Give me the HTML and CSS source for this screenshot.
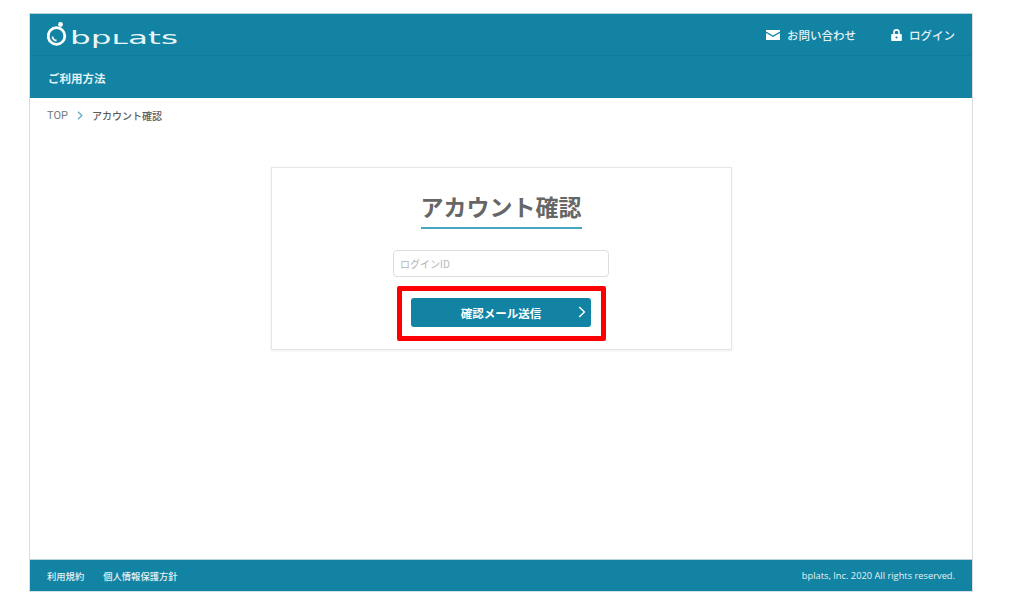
FILE: index.html
```html
<!DOCTYPE html>
<html lang="ja">
<head>
<meta charset="utf-8">
<title>アカウント確認</title>
<link rel="stylesheet" href="styles.css">
</head>
<body>
<div class="frame">
  <header class="header">
    <div class="topbar">
      <a class="logo" href="#">
        <svg class="logo-mark" width="21" height="26" viewBox="0 0 21 26">
          <circle cx="13.500" cy="2.500" r="2.400" fill="#fff"/>
          <path d="M4 8.200 6.500 6" fill="none" stroke="#fff" stroke-width="2"/>
          <circle cx="9.500" cy="14" r="8.300" fill="none" stroke="#fff" stroke-width="2.800"/>
          <path d="M5.500 14.500a4 4 0 0 0 4 4" fill="none" stroke="#fff" stroke-width="1.800"/>
        </svg>
        <svg class="logo-word" width="112" height="26" viewBox="0 0 112 26">
          <text x="1" y="18.500" class="logo-text" textLength="108" lengthAdjust="spacingAndGlyphs">bpʟats</text>
        </svg>
      </a>
      <nav class="topnav">
        <a class="topnav-item" href="#">
          <svg width="14" height="10" viewBox="0 0 13 10" preserveAspectRatio="none"><path d="M0 0h13v1.600L6.500 5.600 0 1.600z M0 3l6.500 4L13 3v7H0z" fill="#fff"/></svg>
          お問い合わせ
        </a>
        <a class="topnav-item" href="#">
          <svg width="11" height="12" viewBox="0 0 11 12"><path d="M1 5h1.200V3.400a3.300 3.300 0 0 1 6.600 0V5H10a.8.8 0 0 1 .8.8v5.400a.8.8 0 0 1-.8.8H1a.8.8 0 0 1-.8-.8V5.800A.8.8 0 0 1 1 5zm2.800 0h3.400V3.400a1.700 1.700 0 0 0-3.400 0z" fill="#fff"/><circle cx="5.500" cy="8.500" r="1.100" fill="#1283a3"/></svg>
          ログイン
        </a>
      </nav>
    </div>
    <div class="subbar"><a class="subbar-link" href="#">ご利用方法</a></div>
  </header>

  <div class="crumbs">
    <a class="crumb-top" href="#">TOP</a>
    <svg class="crumb-sep" width="6" height="9" viewBox="0 0 6 9"><path d="M1 .8 4.800 4.500 1 8.200" fill="none" stroke="#5ba9c4" stroke-width="1.200"/></svg>
    <span class="crumb-now">アカウント確認</span>
  </div>

  <main class="main">
    <section class="card">
      <h1 class="title">アカウント確認</h1>
      <input class="field" type="text" placeholder="ログインID">
      <button class="submit" type="button">
        <span>確認メール送信</span>
        <svg class="submit-arrow" width="8" height="12" viewBox="0 0 8 12"><path d="M1.200 1 6.400 6 1.200 11" fill="none" stroke="#fff" stroke-width="1.400"/></svg>
      </button>
      <div class="highlight"></div>
    </section>
  </main>

  <footer class="footer">
    <div class="footer-links"><a href="#">利用規約</a><a href="#">個人情報保護方針</a></div>
    <div class="copyright">bplats, Inc. 2020 All rights reserved.</div>
  </footer>
</div>
</body>
</html>
```
FILE: styles.css
```css
* { box-sizing: border-box; }
html, body { margin: 0; height: 100%; background: #fff; }
body {
  padding: 13px 47px 15px 29px;
  font-family: "Noto Sans CJK JP", "Noto Sans", sans-serif;
  overflow: hidden;
}
a { color: inherit; text-decoration: none; }
.frame {
  height: 579px;
  display: flex;
  flex-direction: column;
  border-left: 1px solid #dcdcdc;
  border-right: 1px solid #dcdcdc;
}
.header { background: #1283a3; color: #fff; height: 85px; display: flex; flex-direction: column; flex: none; border-top: 1px solid #b9d3db; }
.topbar {
  height: 42px;
  padding: 7px 17px 0 17px;
  display: flex;
  justify-content: space-between;
  align-items: flex-start;
  border-bottom: 1px solid #117c9a;
}
.logo { display: flex; align-items: flex-start; gap: 1px; }
.logo-mark { display: block; margin-top: 1px; }
.logo-word { display: block; margin-top: 4px; }
.logo-text { font-family: "DejaVu Sans", sans-serif; font-size: 18px; font-weight: 400; fill: #eaf5f8; }
.topnav { display: flex; gap: 35px; padding-top: 5px; }
.topnav-item { display: flex; align-items: center; gap: 7px; font-size: 11.5px; font-weight: 500; line-height: 18px; color: #e4f1f5; }
.subbar { flex: 1; padding: 2px 0 0 18px; display: flex; align-items: center; }
.subbar-link { font-size: 11.5px; font-weight: 700; color: #e4f1f5; }
.crumbs {
  flex: none;
  height: 34px;
  padding-left: 17px;
  display: flex;
  align-items: center;
  gap: 8px;
  font-size: 10px;
  color: #666;
}
.crumb-top { font-family: "Roboto", sans-serif; color: #6f7b80; font-size: 11px; }
.crumb-sep { margin: 0 1px; }
.crumb-now { font-weight: 500; color: #5c5c5c; }
.main { flex: 1; display: flex; justify-content: center; padding-top: 35px; }
.card {
  position: relative;
  width: 461px;
  height: 183px;
  border: 1px solid #e6e6e6;
  box-shadow: 0 1px 2px rgba(0,0,0,.08);
  display: flex;
  flex-direction: column;
  align-items: center;
  padding-top: 20px;
}
.title {
  margin: 0;
  font-size: 23px;
  font-weight: 700;
  line-height: 36px;
  height: 41px;
  color: #666;
  border-bottom: 2px solid #4ba6c6;
}
.field {
  margin-top: 21px;
  width: 216px;
  height: 27px;
  border: 1px solid #ddd;
  border-radius: 4px;
  padding: 0 6px;
  font-family: inherit;
  font-size: 10px;
  background: #fff;
}
.field::placeholder { color: #b5b5b5; }
.submit {
  position: relative;
  margin-top: 21px;
  width: 180px;
  height: 29px;
  border: 0;
  border-radius: 3px;
  background: #1283a3;
  color: #fff;
  font-family: inherit;
  font-size: 11.5px;
  font-weight: 700;
  display: flex;
  align-items: center;
  justify-content: center;
}
.submit-arrow { position: absolute; right: 5px; top: 8px; }
.highlight {
  position: absolute;
  left: 125px;
  top: 118px;
  width: 209px;
  height: 55px;
  border: 5px solid #f00;
  border-radius: 2px;
}
.footer {
  flex: none;
  height: 33px;
  background: #1283a3;
  border-top: 1px solid #b9d3db;
  border-bottom: 1px solid #d5e0e4;
  color: #e4f1f5;
  padding: 0 17px;
  display: flex;
  justify-content: space-between;
  align-items: center;
  font-size: 9.3px;
}
.footer-links { display: flex; gap: 19px; font-weight: 500; }
.copyright { font-family: "Open Sans", sans-serif; font-size: 9.3px; font-weight: 500; }
```
